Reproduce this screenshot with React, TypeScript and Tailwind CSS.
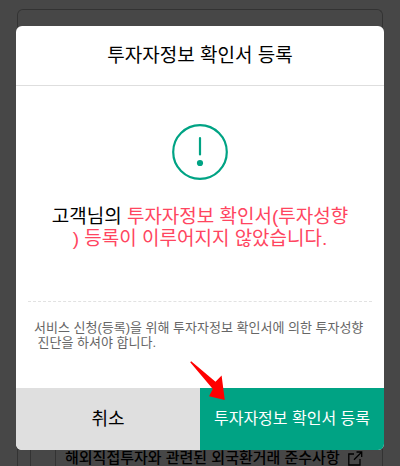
import { useState } from "react";

function ExternalIcon() {
  return (
    <svg viewBox="0 0 16 16" className="h-4 w-4 shrink-0" fill="none" stroke="currentColor" strokeWidth="1.3" aria-hidden="true">
      <path d="M6 4H0.8V15H12V9" />
      <path d="M8.5 2H13.7V7M13.5 2.2L6 9.8" />
    </svg>
  );
}

function NoticeIcon() {
  return (
    <svg viewBox="0 0 56 56" className="h-14 w-14" fill="none" stroke="#00a384" aria-hidden="true">
      <circle cx="28" cy="28" r="26.8" strokeWidth="2.2" />
      <path d="M28 14V30.5" strokeWidth="2.2" strokeLinecap="round" />
      <circle cx="28" cy="39" r="3.1" fill="#00a384" stroke="none" />
    </svg>
  );
}

function PointerArrow() {
  return (
    <svg viewBox="0 0 36 41" className="pointer-events-none absolute -top-[27px] -left-[10px] h-[41px] w-9" aria-hidden="true">
      <path d="M0.2 1.2L1.2 0.2L25.5 20.8L31.6 14.5L34.8 39L19 35.2L22.8 28Z" fill="#ff0000" />
    </svg>
  );
}

// Page that stays dimmed behind the dialog
function BackgroundPage() {
  return (
    <div className="flex h-screen flex-col overflow-hidden px-[17px] pt-[9px]" aria-hidden="true">
      <div className="flex flex-1 items-end rounded-t-md border border-b-0 border-[#b7b7b7] px-3">
        <div className="flex flex-1 border-l border-[#b7b7b7] pl-6">
          <div className="flex flex-1 items-end gap-2 border-l border-[#b7b7b7] pt-10 pl-[9px] text-[15px] leading-4 font-medium whitespace-nowrap text-black">
            <span>해외직접투자와 관련된 외국환거래 준수사항</span>
            <ExternalIcon />
          </div>
        </div>
      </div>
    </div>
  );
}

export default function App() {
  const [open, setOpen] = useState(true);

  return (
    <div className="relative min-h-screen overflow-hidden bg-white font-['Liberation_Sans','Noto_Sans_CJK_KR',sans-serif]">
      <BackgroundPage />

      {open && (
        <div className="absolute inset-0 bg-black/72 px-4 pt-[26px]">
          <div
            role="dialog"
            aria-modal="true"
            aria-labelledby="dialog-title"
            className="flex flex-col overflow-hidden rounded-md bg-white"
          >
            <header className="border-b border-[#dedede] py-4 text-center">
              <h1 id="dialog-title" className="text-[19px] leading-[27px] text-black">
                투자자정보 확인서 등록
              </h1>
            </header>

            <div className="flex flex-col items-center px-3 pt-[38px]">
              <NoticeIcon />
              <p className="mt-[26px] text-center text-[19px] leading-[22px] text-black">
                고객님의{" "}
                <span className="text-[#ff4560]">
                  투자자정보 확인서(투자성향
                  <br />) 등록이 이루어지지 않았습니다.
                </span>
              </p>
              <div className="mt-[51px] w-full border-t border-dashed border-[#e2e2e2]" />
              <p className="w-full pt-[18px] pb-[38px] pl-[6px] text-[13px] leading-[15px] whitespace-nowrap text-[#666666]">
                서비스 신청(등록)을 위해 투자자정보 확인서에 의한 투자성향
                <br />
                &nbsp;진단을 하셔야 합니다.
              </p>
            </div>

            <footer className="grid h-[62px] grid-cols-2">
              <button type="button" onClick={() => setOpen(false)} className="bg-[#dfdfdf] text-[18px] text-black">
                취소
              </button>
              <div className="relative flex">
                <button type="button" className="flex-1 bg-[#00a384] text-[16px] whitespace-nowrap text-white">
                  투자자정보 확인서 등록
                </button>
                <PointerArrow />
              </div>
            </footer>
          </div>
        </div>
      )}
    </div>
  );
}
